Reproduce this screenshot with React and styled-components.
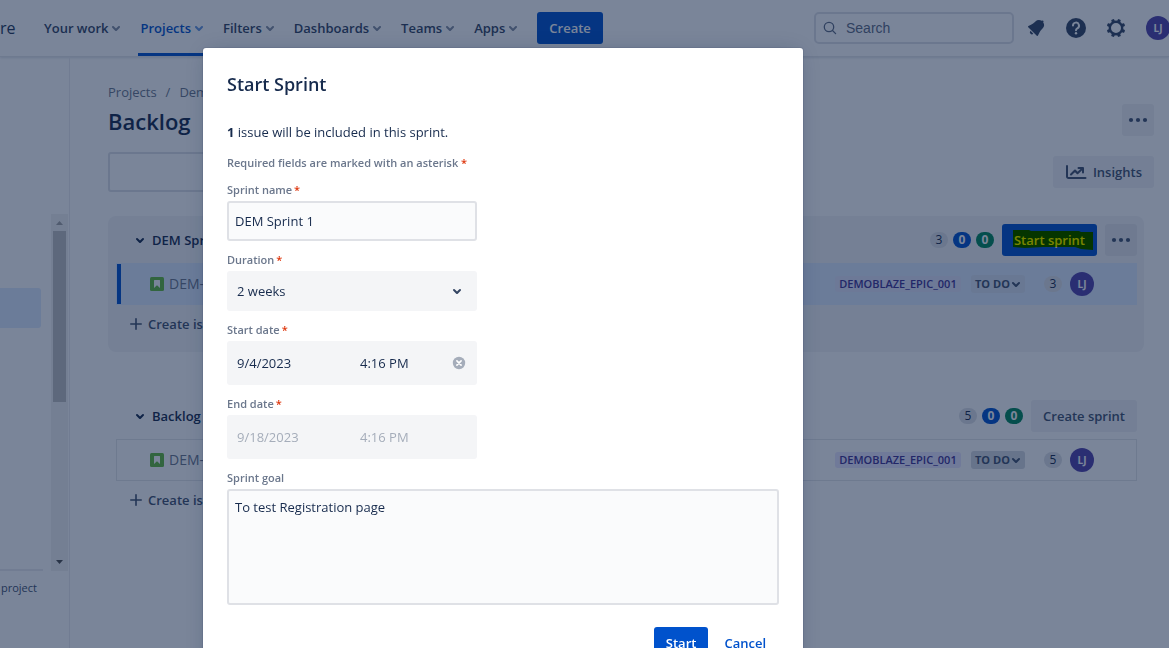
import React from "react";
import styled, { createGlobalStyle, css } from "styled-components";

const Global = createGlobalStyle`
  *, *::before, *::after { box-sizing: border-box; }
  html, body { margin: 0; height: 100%; overflow: hidden; }
  body, button, input, select, textarea {
    font-family: "Open Sans", "Noto Sans", sans-serif;
    font-size: 13px;
    line-height: 20px;
    color: #172b4d;
  }
  h1, h2, h3, p { margin: 0; }
`;

const Page = styled.div`
  display: flex;
  flex-direction: column;
  min-height: 100vh;
  background: #fff;
`;

/* ---------- top bar ---------- */
const TopBar = styled.header`
  display: flex;
  align-items: center;
  height: 57px;
  overflow: hidden;
  border-bottom: 1px solid #e4e6ea;
  box-shadow: 0 1px 2px rgba(9, 30, 66, 0.12);
`;
const Brand = styled.span`
  width: 42px;
  font-size: 16px;
  line-height: 24px;
  color: #253858;
`;
const Menu = styled.nav`
  display: flex;
  align-self: stretch;
  gap: 16px;
`;
const MenuItem = styled.button`
  display: flex;
  align-items: center;
  padding: 0 2px;
  border: 0;
  border-bottom: 3px solid ${(p) => (p.$active ? "#0052cc" : "transparent")};
  border-top: 3px solid transparent;
  background: none;
  font-weight: 600;
  color: ${(p) => (p.$active ? "#0052cc" : "#344563")};
  svg { margin: 0 -8px 0 -4px; opacity: 0.6; }
`;
const Tools = styled.div`
  display: flex;
  align-items: center;
  gap: 8px;
  margin-left: auto;
`;
const SearchBox = styled.label`
  display: flex;
  align-items: center;
  gap: 8px;
  width: 200px;
  height: 32px;
  margin-right: -2px;
  padding: 0 6px;
  border: 2px solid #dfe1e6;
  border-radius: 5px;
  input {
    flex: 1;
    min-width: 0;
    padding: 0;
    border: 0;
    background: none;
    font-family: "Liberation Sans", Arial, sans-serif;
    font-size: 14px;
  }
  input::placeholder { color: #5e6c84; opacity: 1; }
`;
const IconButton = styled.button`
  display: flex;
  align-items: center;
  justify-content: center;
  width: 32px;
  height: 32px;
  padding: 0;
  border: 0;
  border-radius: 3px;
  background: ${(p) => (p.$filled ? "rgba(9, 30, 66, 0.06)" : "none")};
  color: ${(p) => (p.$filled ? "#42526e" : "#344563")};
`;
const Avatar = styled.span`
  display: flex;
  align-items: center;
  justify-content: center;
  flex: none;
  width: 24px;
  height: 24px;
  border-radius: 50%;
  background: #5243aa;
  color: #fff;
  font-size: 10px;
  font-weight: 700;
`;
const AccountAvatar = styled(Avatar)`
  margin: 0 -1px 0 6px;
`;

/* ---------- buttons ---------- */
const Button = styled.button`
  position: relative;
  display: inline-flex;
  align-items: center;
  justify-content: center;
  gap: 6px;
  height: 32px;
  padding: 0 12px;
  border: 0;
  border-radius: 3px;
  background: ${(p) => (p.$primary ? "#0052cc" : "#f1f2f6")};
  color: ${(p) => (p.$primary ? "#fff" : "#42526e")};
  font-weight: 600;
  white-space: nowrap;
`;
const CreateButton = styled(Button)`
  margin-left: 18px;
`;
const LinkButton = styled(Button)`
  padding: 0;
  background: none;
  color: #0052cc;
`;

/* ---------- body ---------- */
const Body = styled.div`
  display: flex;
  flex: 1;
`;
const Sidebar = styled.aside`
  display: flex;
  flex-direction: column;
  width: 70px;
  padding-top: 157px;
  border-right: 1px solid #ebecf0;
`;
const SideScroll = styled.div`
  display: flex;
  justify-content: space-between;
  height: 357px;
  padding-right: 1px;
`;
const SideList = styled.div`
  display: flex;
  flex-direction: column;
  width: 43px;
  padding: 74px 2px 0 0;
  border-bottom: 2px solid #ebecf0;
`;
const SideItem = styled.a`
  height: 40px;
  border-radius: 0 3px 3px 0;
  background: #deebff;
`;
const Track = styled.div`
  display: flex;
  flex-direction: column;
  align-items: center;
  width: 17px;
  background: #f1f1f1;
`;
const Arrow = styled.svg`
  width: 17px;
  height: 17px;
  fill: ${(p) => (p.$dark ? "#505050" : "#a3a3a3")};
`;
const Thumb = styled.div`
  width: 13px;
  height: 171px;
  margin-bottom: auto;
  background: #c1c1c1;
`;
const SideNote = styled.p`
  padding: 9px 0 0 1px;
  font-size: 11px;
  line-height: 16px;
  color: #42526e;
`;

const Main = styled.main`
  flex: 1;
  min-width: 0;
  padding: 25px 15px 0 38px;
`;
const Crumbs = styled.nav`
  display: flex;
  gap: 9px;
  color: #6b778c;
  a { color: inherit; text-decoration: none; }
`;
const Bar = styled.div`
  display: flex;
  align-items: center;
  justify-content: space-between;
  margin-top: ${(p) => p.$top}px;
`;
const PageTitle = styled.h1`
  padding-top: 2px;
  font-size: 22px;
  line-height: 30px;
  font-weight: 600;
`;
const FilterInput = styled.input`
  width: 200px;
  height: 40px;
  border: 2px solid #dfe1e6;
  border-radius: 3px;
  background: none;
`;
const Lists = styled.div`
  display: flex;
  flex-direction: column;
  gap: 40px;
  margin: 24px 10px 0 0;
`;
const List = styled.section`
  padding: 8px 7px 9px 8px;
  border-radius: 8px;
  background: ${(p) => (p.$filled ? "#f4f5f7" : "none")};
`;
const ListHeader = styled.div`
  display: flex;
  align-items: center;
  gap: 8px;
  padding-left: 12px;
  margin-bottom: 7px;
`;
const ListTitle = styled.h2`
  display: flex;
  align-items: center;
  margin-right: auto;
  font-size: 13px;
  line-height: 20px;
  font-weight: 600;
`;
const Badges = styled.div`
  display: flex;
  gap: 5px;
`;
const badgeTones = {
  grey: css`background: #dfe1e6; color: #172b4d;`,
  blue: css`background: #0052cc; color: #fff; font-weight: 700;`,
  green: css`background: #00875a; color: #fff; font-weight: 700;`,
};
const Badge = styled.span`
  width: 18px;
  height: 16px;
  border-radius: 8px;
  font-size: 12px;
  line-height: 16px;
  text-align: center;
  ${(p) => badgeTones[p.$tone || "grey"]}
`;
const Issue = styled.div`
  display: flex;
  align-items: center;
  height: 42px;
  padding: 0 42px 0 33px;
  border: 1px solid #e4e6ea;
  ${(p) =>
    p.$selected &&
    css`
      border-color: #deebff;
      background: #deebff;
      box-shadow: inset 4px 0 0 #0052cc;
    `}
`;
const IssueKey = styled.a`
  margin: 0 auto 0 5px;
  color: #6b778c;
  font-size: 14px;
  text-decoration: none;
`;
const Epic = styled.span`
  width: 126px;
  height: 16px;
  border-radius: 3px;
  background: ${(p) => (p.$soft ? "#e2e5fb" : "#eae6ff")};
  color: #403294;
  font-size: 11px;
  line-height: 16px;
  font-weight: 600;
  text-align: center;
`;
const Status = styled.button`
  display: flex;
  align-items: center;
  justify-content: space-between;
  width: 54px;
  height: 18px;
  margin: 0 19px 0 10px;
  padding: 0 0 0 4px;
  border: 0;
  border-radius: 3px;
  background: ${(p) => (p.$soft ? "#d9e3f2" : "#d6d9e0")};
  color: #42526e;
  font-size: 11px;
  line-height: 16px;
  font-weight: 700;
  white-space: nowrap;
  svg { margin: 0 -3px 0 -7px; flex: none; }
`;
const IssueAvatar = styled(Avatar)`
  margin-left: 8px;
`;
const AddIssue = styled.button`
  display: flex;
  align-items: center;
  gap: 6px;
  height: 38px;
  padding: 0 14px;
  border: 0;
  background: none;
  color: #42526e;
  font-weight: 600;
`;
/* marker stroke that stays above the dimmed page */
const Marker = styled.svg`
  position: absolute;
  inset: 6px auto auto 11px;
  z-index: 20;
  width: 80px;
  height: 20px;
  fill: #ff0;
  mix-blend-mode: multiply;
`;

/* ---------- dialog ---------- */
const Blanket = styled.div`
  position: fixed;
  inset: 0;
  z-index: 10;
  display: flex;
  align-items: flex-start;
  justify-content: center;
  padding: 48px 163px 0 0;
  overflow: hidden;
  background: rgba(9, 30, 66, 0.54);
`;
const Dialog = styled.form`
  display: flex;
  flex-direction: column;
  width: 600px;
  padding: 24px;
  border-radius: 3px;
  background: #fff;
  box-shadow: 0 0 0 1px rgba(9, 30, 66, 0.08), 0 2px 1px rgba(9, 30, 66, 0.08),
    0 0 20px -6px rgba(9, 30, 66, 0.31);
`;
const DialogTitle = styled.h2`
  font-size: 18px;
  line-height: 24px;
  font-weight: 600;
  margin-bottom: 26px;
`;
const Hint = styled.p`
  margin-top: 13px;
  font-size: 11px;
  line-height: 16px;
  font-weight: 600;
  color: #6b778c;
`;
const Field = styled.div`
  display: flex;
  flex-direction: column;
  gap: 3px;
  margin-top: 11px;
  width: ${(p) => (p.$wide ? "100%" : "250px")};
`;
const Label = styled.label`
  font-size: 11px;
  line-height: 16px;
  font-weight: 600;
  color: #6b778c;
`;
const Star = styled.span`
  padding-left: ${(p) => (p.$inline ? 0 : 2)}px;
  color: #de350b;
`;
const boxed = css`
  width: 100%;
  border: 2px solid #dfe1e6;
  border-radius: 3px;
  background: #fafbfc;
  outline: none;
`;
const TextInput = styled.input`
  ${boxed}
  height: 40px;
  padding: 0 6px;
`;
const TextArea = styled.textarea`
  ${boxed}
  display: block;
  height: 116px;
  padding: 6px;
  resize: none;
`;
const SelectBox = styled.div`
  display: grid;
  align-items: center;
  border-radius: 3px;
  background: #f4f5f7;
  color: #344563;
  > * { grid-area: 1 / 1; }
  svg { justify-self: end; margin-right: 8px; pointer-events: none; }
`;
const Select = styled.select`
  width: 100%;
  height: 40px;
  padding: 0 10px;
  border: 0;
  background: none;
  appearance: none;
`;
const DateBox = styled.div`
  display: flex;
  align-items: center;
  height: 44px;
  padding: 0 10px;
  border-radius: 3px;
  background: #f4f5f7;
`;
const DateInput = styled.input`
  width: ${(p) => (p.$time ? 91 : 123)}px;
  padding: 0;
  border: 0;
  background: none;
  &:disabled { color: #a5adba; }
`;
const ClearButton = styled.button`
  display: flex;
  padding: 0;
  border: 0;
  background: none;
`;
const Actions = styled.div`
  display: flex;
  justify-content: flex-end;
  gap: 16px;
  margin-top: 22px;
  padding-right: 13px;
`;

/* ---------- icons ---------- */
const Chevron = () => (
  <svg width="24" height="24" viewBox="0 0 24 24" fill="currentColor" aria-hidden="true">
    <path d="M8.292 10.293a1.009 1.009 0 000 1.419l2.939 2.965c.218.215.5.322.779.322s.556-.107.769-.322l2.93-2.955a1.01 1.01 0 000-1.419.987.987 0 00-1.406 0l-2.298 2.317-2.307-2.327a.99.99 0 00-1.406 0z" />
  </svg>
);
const SearchIcon = () => (
  <svg width="16" height="16" viewBox="0 0 16 16" fill="none" stroke="#5e6c84" strokeWidth="1.3" aria-hidden="true">
    <circle cx="7" cy="7" r="4.7" />
    <path d="M10.500 10.500L13.600 13.600" strokeLinecap="round" />
  </svg>
);
const BellIcon = () => (
  <svg width="24" height="24" viewBox="0 0 24 24" fill="currentColor" aria-hidden="true">
    <path d="M6.485 17.669a2 2 0 002.829 0l-2.829-2.83a2 2 0 000 2.83zm4.897-12.191l-.725.725c-.782.782-2.21 1.813-3.206 2.311l-3.017 1.509c-.495.248-.584.774-.187 1.171l8.556 8.556c.398.396.922.313 1.171-.188l1.51-3.016c.494-.988 1.526-2.42 2.311-3.206l.725-.726a5.048 5.048 0 00.64-6.356 1.01 1.01 0 10-1.354-1.494c-.023.025-.046.049-.066.075a5.043 5.043 0 00-2.788-.84 5.036 5.036 0 00-3.57 1.478z" />
  </svg>
);
const HelpIcon = () => (
  <svg width="24" height="24" viewBox="0 0 24 24" aria-hidden="true">
    <circle cx="12" cy="12" r="10" fill="currentColor" />
    <path d="M9 9.6a3 3 0 1 1 4.3 2.7c-.9.45-1.3.9-1.3 1.9" fill="none" stroke="#fff" strokeWidth="2" strokeLinecap="round" />
    <circle cx="12" cy="17.2" r="1.2" fill="#fff" />
  </svg>
);
const GearIcon = () => (
  <svg width="24" height="24" viewBox="0 0 24 24" aria-hidden="true">
    <circle cx="12" cy="12" r="6.2" fill="none" stroke="currentColor" strokeWidth="2.4" />
    {[0, 1, 2, 3, 4, 5, 6, 7].map((i) => (
      <rect key={i} x="10.4" y="2.7" width="3.2" height="3.4" rx="0.9" fill="currentColor" transform={`rotate(${22.5 + i * 45} 12 12)`} />
    ))}
  </svg>
);
const DotsIcon = () => (
  <svg width="24" height="24" viewBox="0 0 24 24" fill="currentColor" aria-hidden="true">
    <circle cx="5" cy="12" r="2.1" />
    <circle cx="12" cy="12" r="2.1" />
    <circle cx="19" cy="12" r="2.1" />
  </svg>
);
const GraphIcon = () => (
  <svg width="22" height="16" viewBox="0 0 22 16" fill="none" stroke="currentColor" strokeWidth="2" strokeLinecap="round" strokeLinejoin="round" aria-hidden="true">
    <path d="M2 2v10.5a1.5 1.5 0 0 0 1.500 1.500H20.500" />
    <path d="M6 10.500l4-4 2.500 2.700L17 5" />
    <path d="M13.500 4h4.500v4.500" />
  </svg>
);
const StoryIcon = () => (
  <svg width="14" height="14" viewBox="0 0 14 14" aria-hidden="true">
    <rect width="14" height="14" rx="1.500" fill="#63ba3c" />
    <path d="M4.500 3h5a.5.5 0 0 1 .5.5V11L7 8.300 4 11V3.500a.5.5 0 0 1 .5-.5z" fill="#fff" />
  </svg>
);
const PlusIcon = () => (
  <svg width="12" height="12" viewBox="0 0 12 12" stroke="currentColor" strokeWidth="1.600" strokeLinecap="round" aria-hidden="true">
    <path d="M6 .8v10.400M.8 6h10.400" />
  </svg>
);
const ClearIcon = () => (
  <svg width="16" height="16" viewBox="0 0 16 16" aria-hidden="true">
    <circle cx="8" cy="8" r="6.200" fill="#a5adba" />
    <path d="M5.900 5.900l4.200 4.200m0-4.200l-4.200 4.200" stroke="#fff" strokeWidth="1.600" strokeLinecap="round" />
  </svg>
);

const menu = ["Your work", "Projects", "Filters", "Dashboards", "Teams", "Apps"];

const Counts = ({ todo }) => (
  <Badges>
    <Badge>{todo}</Badge>
    <Badge $tone="blue">0</Badge>
    <Badge $tone="green">0</Badge>
  </Badges>
);

const IssueRow = ({ id, points, selected }) => (
  <Issue $selected={selected}>
    <StoryIcon />
    <IssueKey href="#">{id}</IssueKey>
    <Epic $soft={selected}>DEMOBLAZE_EPIC_001</Epic>
    <Status $soft={selected}>
      TO DO
      <Chevron />
    </Status>
    <Badge>{points}</Badge>
    <IssueAvatar>LJ</IssueAvatar>
  </Issue>
);

export default function App() {
  return (
    <>
      <Global />
      <Page>
        <TopBar>
          <Brand>re</Brand>
          <Menu>
            {menu.map((name) => (
              <MenuItem key={name} $active={name === "Projects"}>
                {name}
                <Chevron />
              </MenuItem>
            ))}
          </Menu>
          <CreateButton $primary>Create</CreateButton>
          <Tools>
            <SearchBox>
              <SearchIcon />
              <input type="search" placeholder="Search" aria-label="Search" />
            </SearchBox>
            <IconButton aria-label="Notifications"><BellIcon /></IconButton>
            <IconButton aria-label="Help"><HelpIcon /></IconButton>
            <IconButton aria-label="Settings"><GearIcon /></IconButton>
            <AccountAvatar>LJ</AccountAvatar>
          </Tools>
        </TopBar>
        <Body>
          <Sidebar>
            <SideScroll>
              <SideList>
                <SideItem href="#" aria-label="Backlog" />
              </SideList>
              <Track>
                <Arrow viewBox="0 0 17 17"><path d="M5 11l3.500-4L12 11z" /></Arrow>
                <Thumb />
                <Arrow $dark viewBox="0 0 17 17"><path d="M5 6l3.500 4L12 6z" /></Arrow>
              </Track>
            </SideScroll>
            <SideNote>project</SideNote>
          </Sidebar>
          <Main>
            <Crumbs aria-label="Breadcrumbs">
              <a href="#">Projects</a>
              <span>/</span>
              <a href="#">Demo</a>
            </Crumbs>
            <Bar $top={2}>
              <PageTitle>Backlog</PageTitle>
              <IconButton $filled aria-label="More"><DotsIcon /></IconButton>
            </Bar>
            <Bar $top={16}>
              <FilterInput type="text" aria-label="Search backlog" />
              <Button><GraphIcon />Insights</Button>
            </Bar>
            <Lists>
              <List $filled>
                <ListHeader>
                  <ListTitle><Chevron />DEM Sprint 1</ListTitle>
                  <Counts todo={3} />
                  <Button $primary>
                    Start sprint
                    <Marker viewBox="0 0 80 20" aria-hidden="true">
                      <path d="M0 0L16 0 18 1 66 1 68 2 80 2V20L68 19 62 17 30 17 12 18 0 17z" />
                    </Marker>
                  </Button>
                  <IconButton $filled aria-label="Sprint actions"><DotsIcon /></IconButton>
                </ListHeader>
                <IssueRow id="DEM-1" points={3} selected />
                <AddIssue><PlusIcon />Create issue</AddIssue>
              </List>
              <List>
                <ListHeader>
                  <ListTitle><Chevron />Backlog</ListTitle>
                  <Counts todo={5} />
                  <Button>Create sprint</Button>
                </ListHeader>
                <IssueRow id="DEM-2" points={5} />
                <AddIssue><PlusIcon />Create issue</AddIssue>
              </List>
            </Lists>
          </Main>
        </Body>
      </Page>

      <Blanket>
        <Dialog role="dialog" aria-labelledby="dialog-title" onSubmit={(e) => e.preventDefault()}>
          <DialogTitle id="dialog-title">Start Sprint</DialogTitle>
          <p><b>1</b> issue will be included in this sprint.</p>
          <Hint>Required fields are marked with an asterisk <Star $inline>*</Star></Hint>
          <Field>
            <Label htmlFor="name">Sprint name<Star>*</Star></Label>
            <TextInput id="name" defaultValue="DEM Sprint 1" />
          </Field>
          <Field>
            <Label htmlFor="duration">Duration<Star>*</Star></Label>
            <SelectBox>
              <Select id="duration" defaultValue="2 weeks">
                <option>2 weeks</option>
              </Select>
              <Chevron />
            </SelectBox>
          </Field>
          <Field>
            <Label htmlFor="start">Start date<Star>*</Star></Label>
            <DateBox>
              <DateInput id="start" defaultValue="9/4/2023" />
              <DateInput $time aria-label="Start time" defaultValue="4:16 PM" />
              <ClearButton type="button" aria-label="Clear"><ClearIcon /></ClearButton>
            </DateBox>
          </Field>
          <Field>
            <Label htmlFor="end">End date<Star>*</Star></Label>
            <DateBox>
              <DateInput id="end" disabled defaultValue="9/18/2023" />
              <DateInput $time disabled aria-label="End time" defaultValue="4:16 PM" />
            </DateBox>
          </Field>
          <Field $wide>
            <Label htmlFor="goal">Sprint goal</Label>
            <TextArea id="goal" defaultValue="To test Registration page" />
          </Field>
          <Actions>
            <Button $primary type="submit">Start</Button>
            <LinkButton type="button">Cancel</LinkButton>
          </Actions>
        </Dialog>
      </Blanket>
    </>
  );
}
